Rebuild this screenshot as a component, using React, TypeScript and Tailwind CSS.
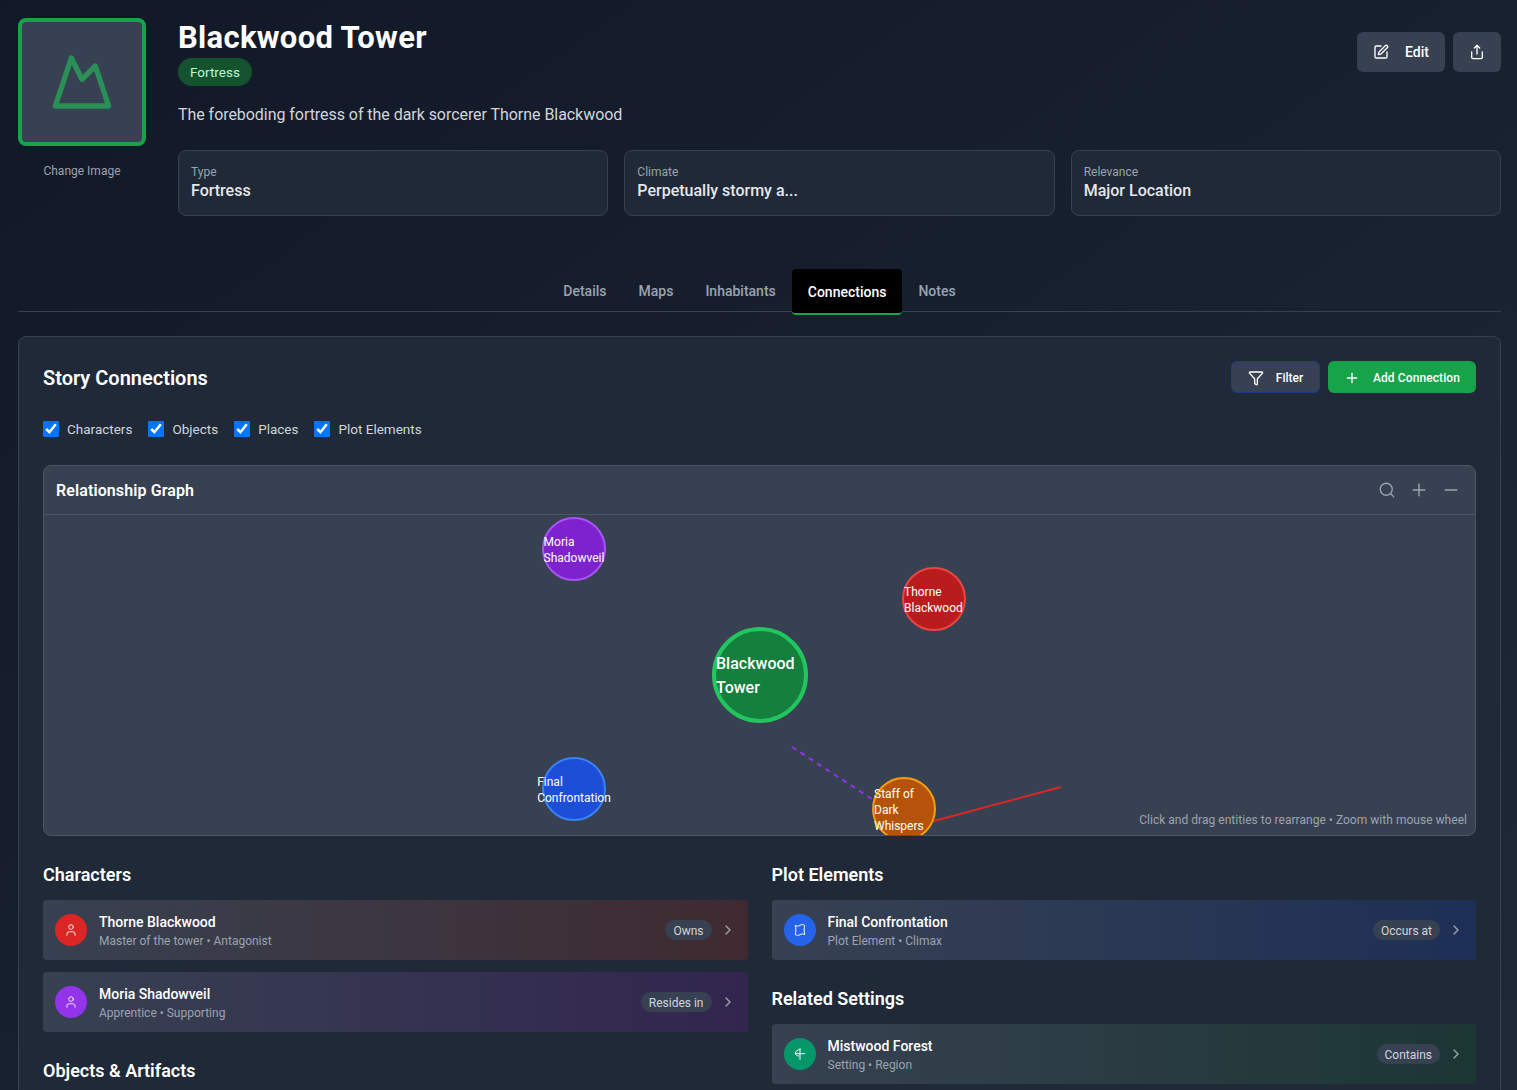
import * as React from 'react';
import {ChevronRight, Filter, Minus, Mountain, Plus, Search, Share, SquarePen, User} from 'lucide-react';

const MapGlyph = () => (
    <svg width="16" height="16" viewBox="0 0 24 24" fill="none" stroke="currentColor" strokeWidth="1.5" strokeLinejoin="round">
        <path d="M5 5c2.500 1.500 4.500 1.500 7 0s4.500-1.500 7 0c-1 4.500-1 9.500 0 14-2.500-1.500-4.500-1.500-7 0s-4.500 1.500-7 0c1-4.500 1-9.500 0-14z" />
    </svg>
);

const RegionGlyph = () => (
    <svg width="16" height="16" viewBox="0 0 24 24" fill="none" stroke="currentColor" strokeWidth="1.5" strokeLinecap="round">
        <path d="M12 4v16" />
        <path d="M12 5C8 5.500 5.500 8 5 11.500h14" />
        <path d="M5 11.500c.5 2 2.500 3.500 5 3.500" />
    </svg>
);

const InfoCard = ({label, value}) => (
    <div className="flex-1 h-[66px] rounded-lg border border-[#374151] bg-[#1f2937] px-3 pt-[13px]">
        <div className="text-xs leading-4 text-[#9ca3af]">{label}</div>
        <div className="text-base leading-5 mt-[1px] font-medium text-[#e5e7eb]">{value}</div>
    </div>
);

const Tab = ({text, isActive = false}) => (
    <div
        className={`h-[46px] px-4 flex items-center text-sm font-medium rounded-t ${
            isActive ? 'bg-black text-white border-b-2 border-[#16a34a] rounded-b-sm pt-[1px]' : 'text-[#9ca3af] pb-[2px]'
        }`}
    >
        {text}
    </div>
);

const FilterCheck = ({text}) => (
    <label className="flex items-center gap-2 text-[13.5px] text-[#d1d5db]">
        <input type="checkbox" defaultChecked className="w-4 h-4" />
        {text}
    </label>
);

const GraphNode = ({label, className, small = true}) => (
    <div
        className={`absolute rounded-full flex items-center justify-center text-white ${
            small ? 'w-16 h-16 border-2 text-xs pt-[2px]' : 'w-24 h-24 border-4 text-base font-medium pt-[2px]'
        } ${className}`}
    >
        <span>{label}</span>
    </div>
);

const ConnectionRow = ({icon, iconBg, gradient, name, meta, relation}) => (
    <div className={`h-[60px] rounded flex items-center pl-3 pr-3 bg-gradient-to-r from-[#374151] ${gradient}`}>
        <div className={`w-8 h-8 rounded-full flex items-center justify-center text-white ${iconBg}`}>{icon}</div>
        <div className="ml-3 flex-1">
            <div className="text-sm leading-5 font-medium text-white">{name}</div>
            <div className="text-xs leading-4 mt-[1px] text-[#9ca3af]">{meta}</div>
        </div>
        <div className="h-5 px-2 pt-[1px] rounded-full bg-[#374151] text-xs flex items-center text-[#d1d5db]">{relation}</div>
        <ChevronRight size={16} className="ml-2 text-[#9ca3af]" />
    </div>
);

const SectionHeading = ({children}) => (
    <h3 className="text-lg leading-7 font-semibold text-white">{children}</h3>
);

const App = () => {
    return (
        <div
            className="h-screen overflow-hidden bg-gradient-to-br from-[#111827] to-[#1f2937] pl-[18px] pr-4 pt-[18px] text-white"
            style={{fontFamily: 'Roboto, sans-serif'}}
        >
            <div className="flex gap-8">
                <div className="w-32 shrink-0">
                    <div className="w-32 h-32 rounded-lg border-4 border-[#16a34a] bg-[#374151] flex items-center justify-center">
                        <Mountain size={64} className="text-[#22c55e] opacity-60" />
                    </div>
                    <div className="mt-[17px] text-center text-xs leading-4 text-[#9ca3af]">Change Image</div>
                </div>
                <div className="flex-1 min-w-0">
                    <div className="flex justify-between">
                        <div>
                            <h1 className="text-[31px] tracking-[0.3px] leading-9 font-bold mt-[2px]">Blackwood Tower</h1>
                            <span className="inline-block mt-[2px] h-7 px-3 rounded-full bg-[#14532d] text-[13.5px] leading-7 text-[#bbf7d0]">
                                Fortress
                            </span>
                            <p className="mt-[17px] text-base leading-6 tracking-[-0.05px] text-[#d1d5db]">
                                The foreboding fortress of the dark sorcerer Thorne Blackwood
                            </p>
                        </div>
                        <div className="flex gap-2 mt-[14px]">
                            <button
                                type="button"
                                className="h-10 w-[88px] rounded-md bg-[#374151] flex items-center justify-center gap-4 text-sm font-medium"
                            >
                                <SquarePen size={16} />
                                Edit
                            </button>
                            <button
                                type="button"
                                className="h-10 w-12 rounded-md bg-[#374151] flex items-center justify-center"
                            >
                                <Share size={16} />
                            </button>
                        </div>
                    </div>
                    <div className="flex gap-4 mt-[23px]">
                        <InfoCard label="Type" value="Fortress" />
                        <InfoCard label="Climate" value="Perpetually stormy a..." />
                        <InfoCard label="Relevance" value="Major Location" />
                    </div>
                </div>
            </div>

            <div className="mt-[53px] h-[43px] border-b border-[#374151] flex justify-center">
                <div className="flex h-[46px]">
                    <Tab text="Details" />
                    <Tab text="Maps" />
                    <Tab text="Inhabitants" />
                    <Tab text="Connections" isActive />
                    <Tab text="Notes" />
                </div>
            </div>

            <div className="mt-6 rounded-lg border border-[#374151] bg-[#1f2937] px-6 pt-6 pb-6">
                <div className="flex items-center justify-between h-8">
                    <h2 className="text-xl font-semibold pt-[2px]">Story Connections</h2>
                    <div className="flex gap-2">
                        <button
                            type="button"
                            className="h-8 w-[89px] pt-[1px] rounded-md bg-[#374151] border border-[#1e3a8a] flex items-center justify-center gap-3 text-xs font-medium"
                        >
                            <Filter size={16} />
                            Filter
                        </button>
                        <button
                            type="button"
                            className="h-8 w-[148px] pt-[1px] rounded-md bg-[#16a34a] flex items-center justify-center gap-[13px] tracking-[0.1px] text-xs font-medium"
                        >
                            <Plus size={16} />
                            Add Connection
                        </button>
                    </div>
                </div>

                <div className="flex gap-4 mt-7 h-4">
                    <FilterCheck text="Characters" />
                    <FilterCheck text="Objects" />
                    <FilterCheck text="Places" />
                    <FilterCheck text="Plot Elements" />
                </div>

                <div className="mt-7 rounded-lg border border-[#4b5563] bg-[#374151] overflow-hidden">
                    <div className="h-[49px] pl-3 pr-[14px] flex items-center justify-between border-b border-[#4b5563]">
                        <span className="text-base font-semibold pt-[2px] tracking-[0.1px]">Relationship Graph</span>
                        <div className="flex items-center gap-3 text-[#9ca3af]">
                            <Search size={18} strokeWidth={1.75} className="mx-[1px]" />
                            <Plus size={20} strokeWidth={1.75} />
                            <Minus size={20} strokeWidth={1.75} />
                        </div>
                    </div>
                    <div className="relative h-[320px] overflow-hidden">
                        <svg className="absolute left-0 top-0 w-full h-full">
                            <line x1="748" y1="232" x2="828" y2="284" stroke="#9333ea" strokeWidth="2" strokeDasharray="5 5" />
                            <line x1="890" y1="306" x2="1017" y2="272" stroke="#dc2626" strokeWidth="2" />
                        </svg>
                        <GraphNode label="Moria Shadowveil" className="left-[498px] top-[2px] bg-[#7e22ce] border-[#a855f7]" />
                        <GraphNode label="Thorne Blackwood" className="left-[858px] top-[52px] bg-[#b91c1c] border-[#ef4444]" />
                        <GraphNode label="Blackwood Tower" small={false} className="left-[668px] top-[112px] bg-[#15803d] border-[#22c55e]" />
                        <GraphNode label="Final Confrontation" className="left-[498px] top-[242px] bg-[#1d4ed8] border-[#3b82f6]" />
                        <GraphNode label="Staff of Dark Whispers" className="left-[828px] top-[262px] bg-[#b45309] border-[#f59e0b]" />
                        <div className="absolute right-2 bottom-[7px] text-xs leading-4 tracking-[0.03px] text-[#9ca3af]">
                            Click and drag entities to rearrange • Zoom with mouse wheel
                        </div>
                    </div>
                </div>

                <div className="grid grid-cols-2 gap-6 mt-[25px]">
                    <div>
                        <SectionHeading>Characters</SectionHeading>
                        <div className="flex flex-col gap-3 mt-[11px]">
                            <ConnectionRow
                                icon={<User size={14} strokeWidth={1.5} />}
                                iconBg="bg-[#dc2626]"
                                gradient="to-[#3f2a30]"
                                name="Thorne Blackwood"
                                meta="Master of the tower • Antagonist"
                                relation="Owns"
                            />
                            <ConnectionRow
                                icon={<User size={14} strokeWidth={1.5} />}
                                iconBg="bg-[#9333ea]"
                                gradient="to-[#32254f]"
                                name="Moria Shadowveil"
                                meta="Apprentice • Supporting"
                                relation="Resides in"
                            />
                        </div>
                        <div className="mt-[25px]">
                            <SectionHeading>Objects &amp; Artifacts</SectionHeading>
                        </div>
                    </div>
                    <div>
                        <SectionHeading>Plot Elements</SectionHeading>
                        <div className="mt-[11px]">
                            <ConnectionRow
                                icon={<MapGlyph />}
                                iconBg="bg-[#2563eb]"
                                gradient="to-[#1e2f56]"
                                name="Final Confrontation"
                                meta="Plot Element • Climax"
                                relation="Occurs at"
                            />
                        </div>
                        <div className="mt-[25px]">
                            <SectionHeading>Related Settings</SectionHeading>
                        </div>
                        <div className="mt-[11px]">
                            <ConnectionRow
                                icon={<RegionGlyph />}
                                iconBg="bg-[#059669]"
                                gradient="to-[#1c3634]"
                                name="Mistwood Forest"
                                meta="Setting • Region"
                                relation="Contains"
                            />
                        </div>
                    </div>
                </div>
            </div>
        </div>
    );
};

export default App;
